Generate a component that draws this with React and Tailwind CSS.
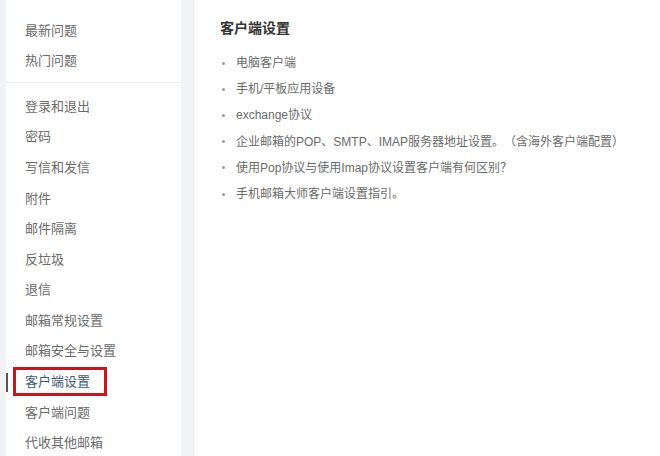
const topItems = ["最新问题", "热门问题"];
const menuItems = [
  "登录和退出",
  "密码",
  "写信和发信",
  "附件",
  "邮件隔离",
  "反垃圾",
  "退信",
  "邮箱常规设置",
  "邮箱安全与设置",
  "客户端设置",
  "客户端问题",
  "代收其他邮箱",
];
const links = [
  "电脑客户端",
  "手机/平板应用设备",
  "exchange协议",
  "企业邮箱的POP、SMTP、IMAP服务器地址设置。（含海外客户端配置）",
  "使用Pop协议与使用Imap协议设置客户端有何区别？",
  "手机邮箱大师客户端设置指引。",
];

function MenuItem({ label, active }) {
  return (
    <div className="relative flex h-[30.6px] items-center pl-[19px]">
      {active ? (
        <>
          <div className="absolute left-0 top-[6px] h-[19px] w-[2px] bg-[#555]" />
          <div className="absolute left-[7px] top-[0px] h-[29px] w-[94px] border-[3px] border-[#d0121b]" />
        </>
      ) : null}
      <span className={active ? "text-[#3d5a73]" : "text-[#6a6a6a]"}>{label}</span>
    </div>
  );
}

export default function App() {
  return (
    <div
      className="flex h-[456px] w-[660px] overflow-hidden bg-[#f2f3f5] text-[13px] [text-spacing-trim:space-all]"
      style={{ fontFamily: '"Liberation Sans", "Noto Sans CJK SC", sans-serif' }}
    >
      <aside className="ml-[6px] w-[175px] shrink-0 bg-white">
        <div className="pt-[15px] pb-[6px]">
          {topItems.map((item) => (
            <MenuItem key={item} label={item} />
          ))}
        </div>
        <div className="h-px bg-[#eef0f2]" />
        <div className="pt-[8px]">
          {menuItems.map((item) => (
            <MenuItem key={item} label={item} active={item === "客户端设置"} />
          ))}
        </div>
      </aside>
      <div className="ml-[12px] w-px shrink-0 bg-[#e6e8eb]" />
      <main className="flex-1 bg-white pl-[26px] pt-[17px]">
        <h1 className="text-[14px] font-bold leading-[22px] text-[#333]">客户端设置</h1>
        <ul className="mt-[11px] text-[12px] text-[#6a6a6a]">
          {links.map((link) => (
            <li key={link} className="flex h-[26.2px] items-center">
              <span className="mr-[11px] ml-[2px] h-[3px] w-[3px] rounded-full bg-[#999]" />
              <span>{link}</span>
            </li>
          ))}
        </ul>
      </main>
    </div>
  );
}
